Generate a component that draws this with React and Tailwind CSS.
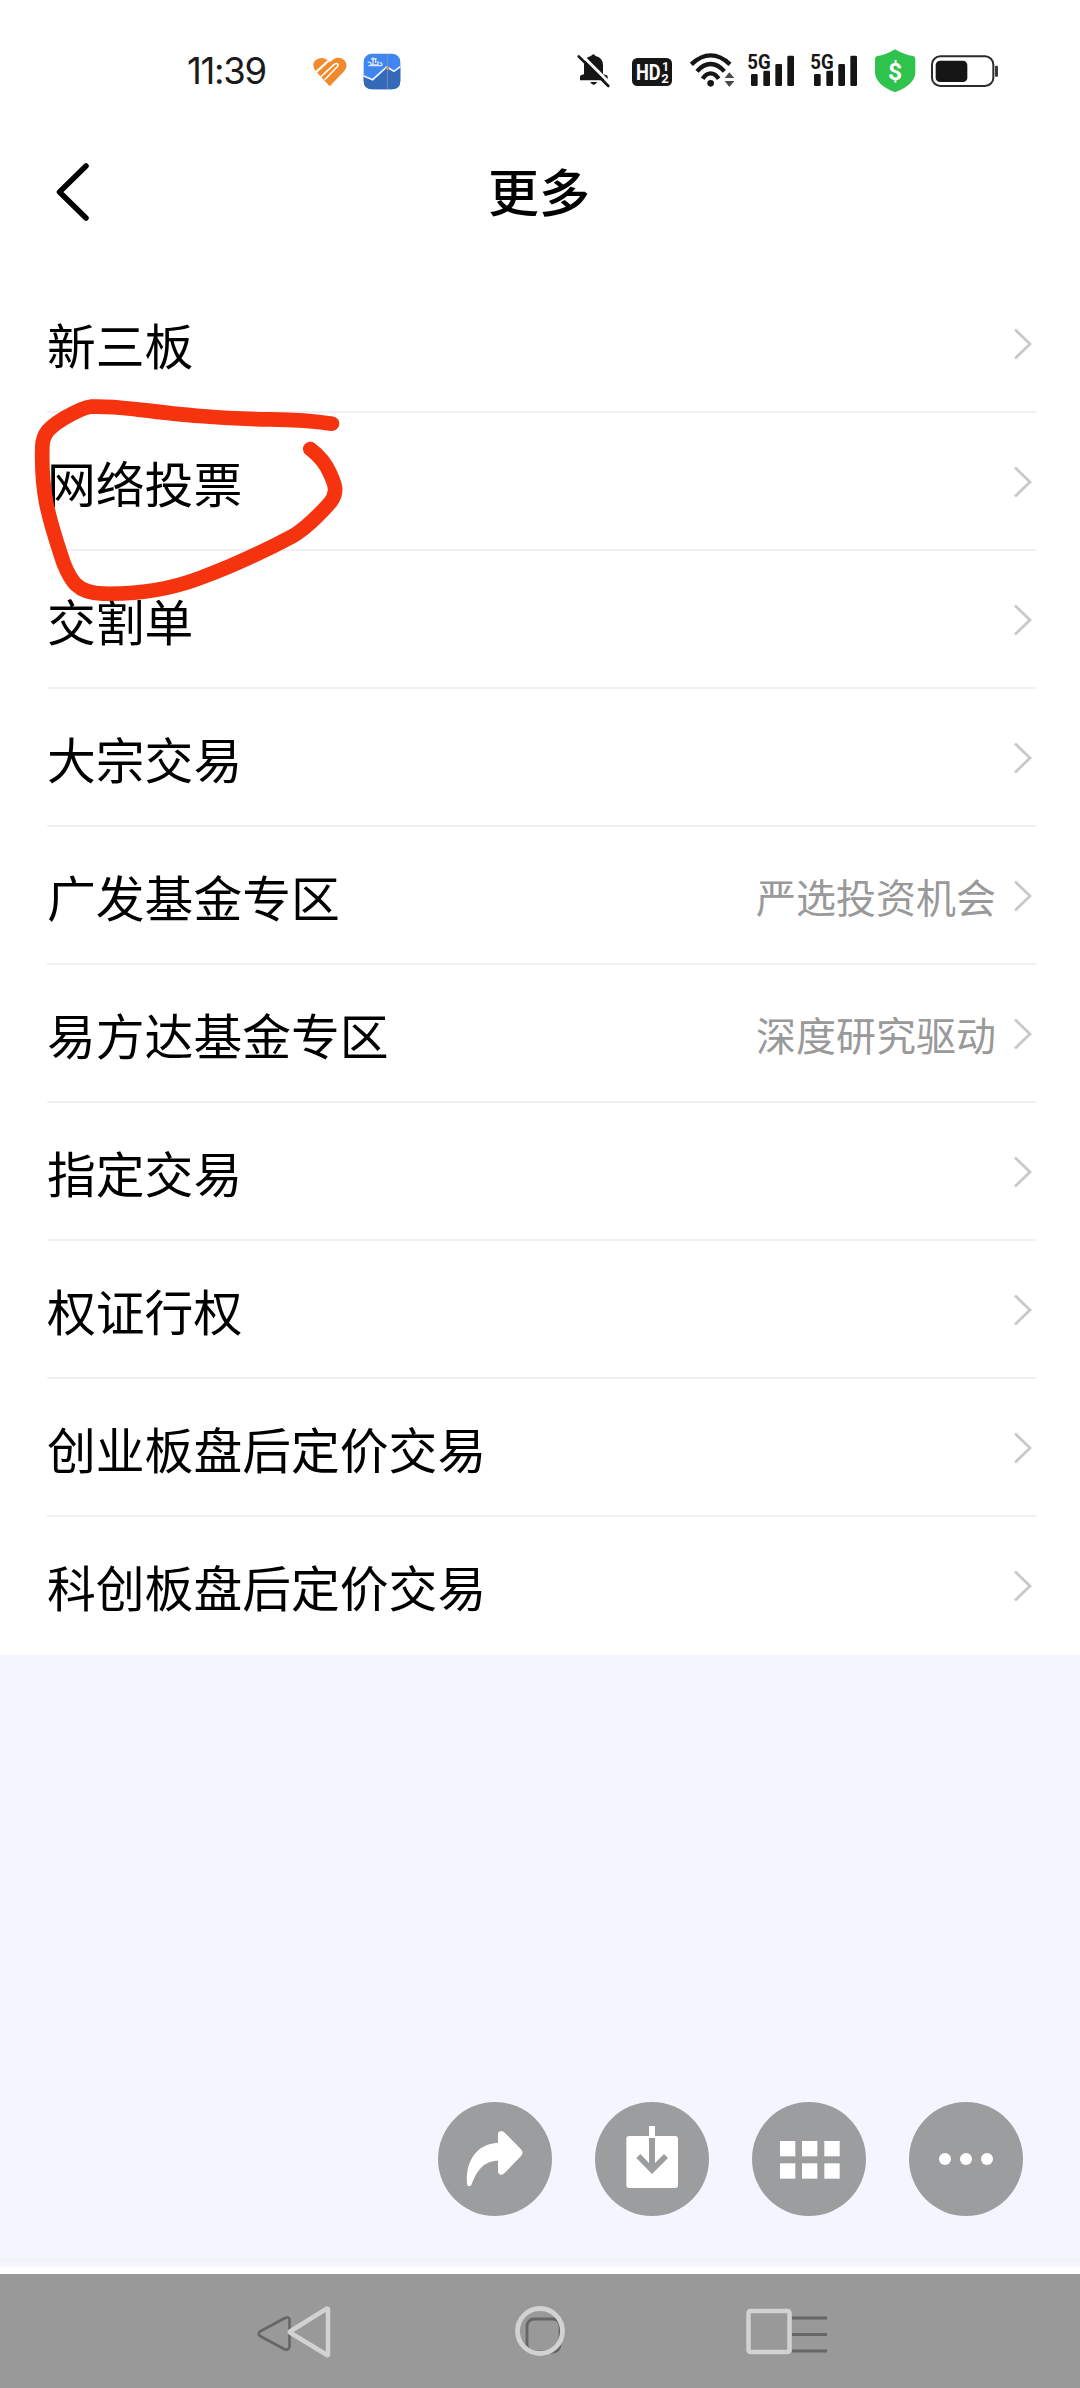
const MENU_ITEMS = [
  { label: '新三板' },
  { label: '网络投票' },
  { label: '交割单' },
  { label: '大宗交易' },
  { label: '广发基金专区', hint: '严选投资机会' },
  { label: '易方达基金专区', hint: '深度研究驱动' },
  { label: '指定交易' },
  { label: '权证行权' },
  { label: '创业板盘后定价交易' },
  { label: '科创板盘后定价交易' },
];

function SignalIcon({ className }) {
  return (
    <svg className={className} width="50" height="48" viewBox="561 51 150 144" fill="#161616">
      <text x="562" y="117" fontSize="60" fontWeight="700" fontFamily="Roboto, sans-serif" textLength="70" lengthAdjust="spacingAndGlyphs">5G</text>
      <rect x="573" y="132" width="20" height="36" rx="4" />
      <rect x="610" y="122" width="20" height="46" rx="4" />
      <rect x="646" y="102" width="20" height="66" rx="4" />
      <rect x="682" y="77" width="20" height="91" rx="4" />
    </svg>
  );
}

function StatusBar() {
  return (
    <div className="flex h-[142px] items-center pl-[187px]">
      <span className="w-[125px] font-['Inter'] text-[36.500px] leading-none tracking-[-1.3px] text-[#1b1b1b]">11:39</span>

      {/* Health app */}
      <svg width="36" height="48" viewBox="456 51 108 144">
        <path d="M509 169 L466 122 Q455 106 464 93 Q481 76 503 90 L510 96 Q532 74 553 90 Q566 107 553 123Z" fill="#f18a2c" />
        <path d="M467 127 L508 90" stroke="#fff" strokeWidth="7" />
        <path d="M483 140 L522 104 Q529 98 533 102 Q536 107 530 112 L494 149" fill="none" stroke="#fff" strokeWidth="4.500" />
      </svg>

      {/* Stock chart app */}
      <svg className="ml-[15px]" width="38" height="48" viewBox="609 51 114 144">
        <rect x="611" y="71" width="110" height="107" rx="25" fill="#3f86ee" />
        <path d="M611 139 L638 149 L680 111 L702 124 L721 110 V153 Q721 178 696 178 H636 Q611 178 611 153Z" fill="#3468b8" />
        <path d="M611 138 L638 149 L680 111 L702 124 L721 110" fill="none" stroke="#eef5ff" strokeWidth="5" />
        <path d="M682 71 V178" stroke="#8f9fae" strokeWidth="2" />
        <circle cx="682" cy="115" r="5" fill="#c98f69" />
        <path d="M623 97 Q634 94 633 105 H654 V94 M633 87 H650 M639 82 V103 M647 84 V99 M625 107 H665 Q668 97 659 98" fill="none" stroke="#dbe9ff" strokeWidth="4" />
      </svg>

      {/* Muted bell */}
      <svg className="ml-[175px]" width="36" height="48" viewBox="48 51 108 144" fill="#161616">
        <path d="M60 151 V140 Q60 135 72 133 V103 Q74 82 93 78 Q100 68 107 78 Q129 83 129 106 V133 Q143 135 143 140 V151Z" />
        <path d="M91 156 H111 Q108 164 101 164 Q94 164 91 156Z" />
        <path d="M62 72 L154 164" stroke="#fff" strokeWidth="9" />
        <path d="M56 79 L145 168" stroke="#161616" strokeWidth="8" strokeLinecap="round" />
      </svg>

      <svg className="ml-[18px]" width="44" height="48" viewBox="210 51 132 144">
        <rect x="216" y="84" width="120" height="84" rx="16" fill="#161616" />
        <g fill="#fff" fontFamily="Roboto, sans-serif" fontWeight="700">
          <text x="228" y="149" fontSize="64" textLength="74" lengthAdjust="spacingAndGlyphs">HD</text>
          <text x="306" y="122" fontSize="37">1</text>
          <text x="304" y="158" fontSize="39">2</text>
        </g>
      </svg>

      {/* Wifi with traffic arrows */}
      <svg className="ml-[15px]" width="46" height="48" viewBox="387 51 138 144" fill="none" stroke="#161616" strokeWidth="13">
        <path d="M394 103 Q422 76 452 76 Q482 76 510 103" />
        <path d="M411 124 Q430 102 452 102 Q474 102 493 124" />
        <path d="M428 146 Q439 130 452 130 Q465 130 476 146" />
        <circle cx="452" cy="160" r="10" fill="#161616" stroke="none" />
        <path d="M494 144 L508 127 L523 144Z M494 153 H523 L508 171Z" fill="#4a4a4a" stroke="none" />
      </svg>

      <SignalIcon className="ml-3" />
      <SignalIcon className="ml-[13px]" />

      <svg className="ml-3.5" width="42" height="48" viewBox="252 51 126 144">
        <path d="M315 58 Q344 75 370 78 Q376 80 376 88 V128 Q374 164 315 187 Q257 164 255 128 V88 Q255 80 261 78 Q288 75 315 58Z" fill="#2fc24d" />
        <text x="315" y="149" textAnchor="middle" fontSize="74" fontWeight="700" fontFamily="Roboto, sans-serif" fill="#fff">$</text>
      </svg>

      <svg className="ml-3.5" width="70" height="48" viewBox="426 51 210 144">
        <rect x="432" y="79" width="184" height="89" rx="25" fill="none" stroke="#2b2a2f" strokeWidth="6" />
        <rect x="443" y="92" width="95" height="64" rx="13" fill="#161616" />
        <rect x="621" y="107" width="9" height="33" rx="2" fill="#3b3b3e" />
      </svg>
    </div>
  );
}

function Header() {
  return (
    <div className="relative flex h-[133px] items-start justify-center">
      <svg className="absolute left-[52px] top-[17px]" width="42" height="66" viewBox="0 0 42 66" fill="none" stroke="#000" strokeWidth="5.5" strokeLinecap="round" strokeLinejoin="round">
        <path d="M34 7 L7.5 33 L34 59" />
      </svg>
      <h1 className="mt-2.5 pr-0.5 text-[51px] font-medium leading-[76px] text-black">更多</h1>
    </div>
  );
}

function MenuRow({ item, last }) {
  return (
    <div className={`flex h-[138px] items-center border-b-2 ${last ? 'border-transparent' : 'border-[#f0f0f2]'}`}>
      <span className="mt-px flex-1 text-[48.8px] leading-[72px] text-black">{item.label}</span>
      {item.hint && <span className="mt-0.5 text-[40px] leading-[60px] text-[#999]">{item.hint}</span>}
      <svg className="ml-4 mr-0.5 mt-0.5" width="22" height="34" viewBox="0 0 22 34" fill="none" stroke="#c9c9c9" strokeWidth="2.8">
        <path d="M3 2.5 L18 17 L3 31.5" />
      </svg>
    </div>
  );
}

// Hand-drawn marker around the second row
function MarkerCircle() {
  return (
    <svg className="absolute left-0 top-[380px]" width="380" height="290" viewBox="0 0 1140 870" fill="none">
      <path
        d="M996 131 C930 121 890 119 810 118 C650 117 520 101 400 87 C340 80 300 79 272 80 C244 83 215 102 185 119 C150 141 128 160 127 200 C125 270 130 325 139 370 C153 440 175 500 191 550 C211 600 230 640 310 641 C410 643 500 632 600 594 C700 558 790 515 880 467 C925 440 960 402 992 366 C1016 333 1003 310 990 280 C976 248 955 225 931 207"
        stroke="#f5330f"
        strokeWidth="44"
        strokeLinecap="round"
        strokeLinejoin="round"
      />
    </svg>
  );
}

function RoundButton({ children }) {
  return (
    <button className="h-[114px] w-[114px] rounded-full bg-[#9c9d9f]">
      <svg width="114" height="114" viewBox="0 0 342 342" fill="#fff">
        {children}
      </svg>
    </button>
  );
}

function FloatingActions() {
  return (
    <div className="flex justify-end gap-[43px] pr-[57px]">
      <RoundButton>
        <path d="M180 122 V98 Q180 87 190 87 Q195 87 200 92 L249 142 Q258 152 249 162 L200 213 Q195 218 190 218 Q180 218 180 207 V176 C139 176 116 205 101 247 Q99 253 94 253 Q88 253 87 246 C82 185 110 126 180 122Z" />
      </RoundButton>
      <RoundButton>
        <rect x="94" y="102" width="155" height="156" rx="9" />
        <rect x="162" y="72" width="18" height="36" />
        <path d="M162 108 H180 V183 L207 156 L219 168 L171 216 L124 168 L136 156 L162 183Z" fill="#9c9d9f" />
      </RoundButton>
      <RoundButton>
        {[84, 150, 217].map((x) => (
          <g key={x}>
            <rect x={x} y="117" width="46" height="46" />
            <rect x={x} y="184" width="46" height="46" />
          </g>
        ))}
      </RoundButton>
      <RoundButton>
        <circle cx="108" cy="171" r="18" />
        <circle cx="171" cy="171" r="18" />
        <circle cx="234" cy="171" r="18" />
      </RoundButton>
    </div>
  );
}

function NavBar() {
  return (
    <div className="flex h-[114px] items-center bg-[#999] pl-64">
      <svg width="76" height="60" viewBox="0 0 76 60" fill="none" strokeLinejoin="round">
        <path d="M33.5 18.5 V46 Q32 50 28 48 L4 35 Q1.500 33 4 30.500 L28 17.500 Q33 15 33.500 18.500Z" stroke="#666" strokeWidth="2.6" />
        <path d="M72 8 V54 Q71.500 54.500 71 54 L34 31.500 Q33.500 31 34 30.500 L71 7.500Z" stroke="#d2d2d2" strokeWidth="4.5" />
      </svg>
      <svg className="ml-[180px]" width="56" height="60" viewBox="0 0 56 60" fill="none">
        <rect x="15" y="18" width="33" height="33" rx="7" stroke="#666" strokeWidth="2.8" />
        <circle cx="28" cy="30" r="22.500" stroke="#d2d2d2" strokeWidth="4.8" />
      </svg>
      <svg className="ml-[176px]" width="86" height="60" viewBox="0 0 86 60" fill="none">
        <path d="M48 17 H83 M48 33.500 H83 M48 50 H83" stroke="#666" strokeWidth="3.2" />
        <rect x="4.500" y="10" width="41" height="41" rx="2" stroke="#d2d2d2" strokeWidth="4.500" />
      </svg>
    </div>
  );
}

export default function App() {
  return (
    <div className="relative flex h-[2388px] w-[1080px] flex-col overflow-hidden bg-white font-['Noto_Sans_CJK_SC',sans-serif]">
      <StatusBar />
      <Header />
      <div className="pl-[47px] pr-11">
        {MENU_ITEMS.map((item, i) => (
          <MenuRow key={item.label} item={item} last={i === MENU_ITEMS.length - 1} />
        ))}
      </div>
      <div className="flex flex-1 flex-col justify-end bg-[#f3f6ff]">
        <FloatingActions />
        <div className="mt-[42px] h-4 bg-linear-to-b from-[#f1f5fa] from-30% to-white to-70%" />
      </div>
      <NavBar />
      <MarkerCircle />
    </div>
  );
}
